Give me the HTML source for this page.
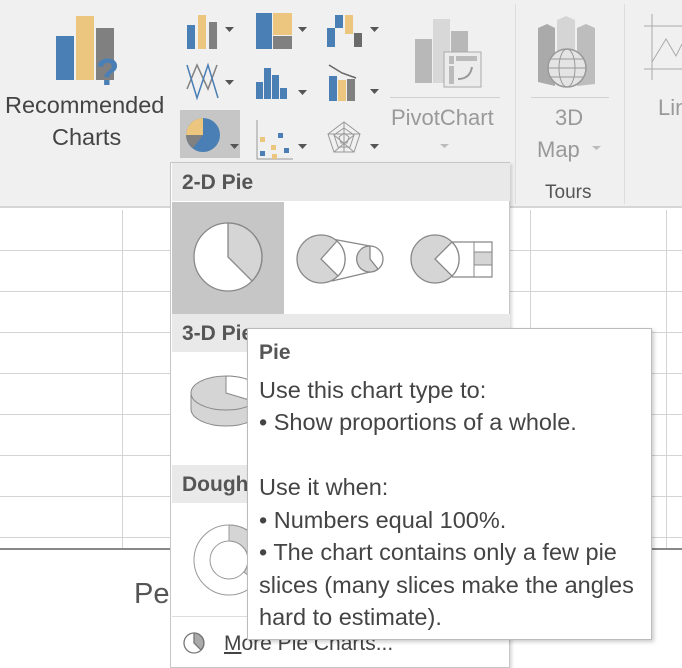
<!DOCTYPE html>
<html><head><meta charset="utf-8"><style>
*{margin:0;padding:0;box-sizing:border-box}
body{width:682px;height:668px;overflow:hidden;background:#fff;font-family:"Liberation Sans","DejaVu Sans",sans-serif;position:relative;color:#444}
.a{position:absolute}
.rib{left:0;top:0;width:682px;height:208px;background:#f0f0f0;border-bottom:2px solid #d6d6d6}
.t{position:absolute;white-space:nowrap}
.hl{position:absolute;height:1px;background:#d4d4d4}
.vl{position:absolute;width:1px;background:#d4d4d4}
.hdr{position:absolute;left:1px;width:338px;height:38px;background:#e9e9e9;font-weight:bold;font-size:21px;color:#555;padding:8px 0 0 10px}
.tip div{font-size:23.5px;line-height:32.5px;color:#444;white-space:nowrap}
</style></head><body>
<div class="a rib"></div>
<svg class="a" style="left:50px;top:12px" width="80" height="80">
<rect x="6" y="24" width="18" height="44" fill="#4a7fb5"/>
<rect x="26" y="4" width="18" height="64" fill="#ecc67e"/>
<rect x="46" y="16" width="18" height="52" fill="#808080"/>
<text x="46" y="73" font-size="38" font-weight="bold" fill="#4a7fb5" font-family="Liberation Sans">?</text>
</svg>
<div class="t" style="left:5px;top:92px;font-size:23.5px;color:#444">Recommended</div>
<div class="t" style="left:52px;top:124px;font-size:23.5px;color:#444">Charts</div>
<svg class="a" style="left:180px;top:10px" width="210" height="150">
<g><rect x="7" y="15" width="8" height="24" fill="#4a7fb5"/><rect x="18" y="5" width="8" height="34" fill="#ecc67e"/><rect x="29" y="12" width="8" height="27" fill="#808080"/><path d="M45 17h9l-4.5 5z" fill="#555"/></g>
<g transform="translate(76,0)"><rect x="0" y="3" width="16" height="36" fill="#4a7fb5"/><rect x="17" y="3" width="19" height="22" fill="#ecc67e"/><rect x="17" y="26" width="19" height="13" fill="#808080"/><path d="M42 17h9l-4.5 5z" fill="#555"/></g>
<g transform="translate(146,0)"><rect x="1" y="18" width="8" height="19" fill="#4a7fb5"/><rect x="9" y="5" width="8" height="13" fill="#4a7fb5"/><rect x="19" y="5" width="8" height="19" fill="#ecc67e"/><rect x="28" y="23" width="8" height="14" fill="#6b6b6b"/><path d="M44 17h9l-4.5 5z" fill="#555"/></g>
<g transform="translate(0,53)" fill="none" stroke-width="1.5"><path d="M7 26L17 2L28 26L37 2" stroke="#808080"/><path d="M7 2L17 35L28 2L38 35" stroke="#4a7fb5"/><path d="M45 17h9l-4.5 5z" fill="#555" stroke="none"/></g>
<g transform="translate(76,50)"><rect x="0" y="22" width="7" height="17" fill="#4a7fb5"/><rect x="8" y="8" width="7" height="31" fill="#4a7fb5"/><rect x="16" y="15" width="7" height="24" fill="#4a7fb5"/><rect x="24" y="28" width="7" height="11" fill="#4a7fb5"/><path d="M42 30h9l-4.5 5z" fill="#555"/></g>
<g transform="translate(146,52)"><rect x="3" y="14" width="8" height="25" fill="#4a7fb5"/><rect x="12" y="18" width="8" height="21" fill="#ecc67e"/><rect x="21" y="17" width="8" height="22" fill="#808080"/><path d="M3 3L16 11L30 16" stroke="#666" stroke-width="1.5" fill="none"/><path d="M44 27h9l-4.5 5z" fill="#555"/></g>
<rect x="-10" y="100" width="70" height="48" fill="#c6c6c6"/>
<g transform="translate(5,107)"><circle cx="18" cy="18" r="17" fill="#4a7fb5"/><path d="M18 18V1A17 17 0 0 0 1 18z" fill="#ecc67e"/><path d="M18 18H1A17 17 0 0 0 8 31z" fill="#808080"/><path d="M45 27h9l-4.5 5z" fill="#555"/></g>
<g transform="translate(76,110)"><path d="M1 0V39H37" stroke="#999" fill="none"/><rect x="4" y="17" width="5" height="5" fill="#ecc67e"/><rect x="15" y="25" width="5" height="5" fill="#ecc67e"/><rect x="4" y="31" width="5" height="5" fill="#4a7fb5"/><rect x="22" y="13" width="5" height="5" fill="#4a7fb5"/><rect x="28" y="28" width="5" height="5" fill="#4a7fb5"/><rect x="16" y="34" width="5" height="5" fill="#ecc67e"/><path d="M42 24h9l-4.5 5z" fill="#555"/></g>
<g transform="translate(146,110)" stroke="#999" fill="none"><path d="M18 2L34 14L28 32H8L2 14z M18 8L28 15L24 27H12L8 15z M18 13L23 17L21 23H15L13 17z M18 2V32M2 14L34 14M8 32L28 15M28 32L8 15"/><path d="M44 24h9l-4.5 5z" fill="#555" stroke="none"/></g>
</svg>
<svg class="a" style="left:412px;top:16px" width="70" height="76">
<rect x="3" y="23" width="17" height="44" fill="#b8b8b8"/><rect x="21" y="3" width="17" height="64" fill="#d8d8d8"/><rect x="39" y="15" width="17" height="40" fill="#b8b8b8"/>
<rect x="32" y="36" width="37" height="35" fill="#ececec" stroke="#aaa"/><rect x="37" y="40" width="5" height="8" fill="#bbb"/><rect x="44" y="40" width="21" height="5" fill="#bbb"/><rect x="37" y="50" width="5" height="18" fill="#bbb"/><path d="M46 63q12 0 14-12" stroke="#999" stroke-width="2" fill="none"/>
</svg>
<div class="hl" style="left:390px;top:97px;width:110px;background:#d0d0d0"></div>
<div class="t" style="left:391px;top:105px;font-size:22px;color:#999">PivotChart</div>
<svg class="a" style="left:440px;top:144px" width="10" height="6"><path d="M0 0h9l-4.5 4z" fill="#bbb"/></svg>
<div class="vl" style="left:515px;top:4px;height:200px;background:#ddd"></div>
<svg class="a" style="left:535px;top:14px" width="70" height="76">
<path d="M3 14L12 10L20 14V72L3 68z" fill="#aaa"/><path d="M22 6L31 2L40 6V72H22z" fill="#d5d5d5"/><path d="M42 14L51 10L60 14V70L42 72z" fill="#bdbdbd"/>
<circle cx="32" cy="54" r="19" fill="#e4e4e4" stroke="#999" stroke-width="1.5"/><ellipse cx="32" cy="54" rx="8" ry="19" fill="none" stroke="#999"/><path d="M13 54H51M16 45H48M16 63H48" stroke="#999" fill="none"/>
</svg>
<div class="hl" style="left:531px;top:97px;width:78px;background:#d0d0d0"></div>
<div class="t" style="left:555px;top:105px;font-size:22px;color:#999">3D</div>
<div class="t" style="left:537px;top:137px;font-size:22px;color:#999">Map</div>
<svg class="a" style="left:592px;top:146px" width="10" height="6"><path d="M0 0h9l-4.5 4z" fill="#bbb"/></svg>
<div class="t" style="left:545px;top:182px;font-size:19px;color:#555">Tours</div>
<div class="vl" style="left:624px;top:4px;height:200px;background:#ddd"></div>
<svg class="a" style="left:644px;top:14px" width="38" height="70" stroke="#aaa" fill="none"><path d="M8 0V66M0 55H38M0 12H38M8 48L22 25L32 42L38 30"/></svg>
<div class="t" style="left:658px;top:95px;font-size:22px;color:#999">Lin</div>
<div class="hl" style="left:0;top:250px;width:682px"></div>
<div class="hl" style="left:0;top:291px;width:682px"></div>
<div class="hl" style="left:0;top:332px;width:682px"></div>
<div class="hl" style="left:0;top:373px;width:682px"></div>
<div class="hl" style="left:0;top:414px;width:682px"></div>
<div class="hl" style="left:0;top:455px;width:682px"></div>
<div class="hl" style="left:0;top:496px;width:682px"></div>
<div class="hl" style="left:0;top:537px;width:682px"></div>
<div class="vl" style="left:122px;top:210px;height:338px"></div>
<div class="vl" style="left:530px;top:210px;height:338px"></div>
<div class="vl" style="left:666px;top:210px;height:338px"></div>
<div class="a" style="left:0;top:548px;width:682px;height:120px;background:#fff;border-top:2px solid #888"></div>
<div class="t" style="left:134px;top:578px;font-size:29px;color:#555">Pe</div>
<div class="a" style="left:170px;top:162px;width:340px;height:506px;background:#fff;border:1px solid #c6c6c6;box-shadow:2px 2px 3px rgba(0,0,0,.15)">
<div class="hdr" style="top:0">2-D Pie</div>
<div class="a" style="left:1px;top:39px;width:112px;height:112px;background:#c6c6c6"></div>
<svg class="a" style="left:0;top:39px" width="338" height="112">
<circle cx="57" cy="55" r="34" fill="#fff" stroke="#888" stroke-width="1.3"/><path d="M57 55V21A34 34 0 0 1 81 79z" fill="#d5d5d5" stroke="#888" stroke-width="1.3"/>
<path d="M161 37L199 44M161 79L199 70" stroke="#888" stroke-width="1.2"/>
<circle cx="150" cy="57" r="24" fill="#d5d5d5" stroke="#888" stroke-width="1.3"/>
<path d="M150 57L166 39A24 24 0 0 1 167 74z" fill="#fff" stroke="#888" stroke-width="1.3"/>
<circle cx="199" cy="57" r="13" fill="#fff" stroke="#888" stroke-width="1.3"/>
<path d="M199 57V44A13 13 0 1 0 207 67z" fill="#d5d5d5" stroke="#888" stroke-width="1.3"/>
<circle cx="264" cy="57" r="24" fill="#d5d5d5" stroke="#888" stroke-width="1.3"/>
<path d="M264 57L281 40A24 24 0 0 1 281 74z" fill="#fff" stroke="#888" stroke-width="1.3"/>
<path d="M281 40H321V75H281" stroke="#888" fill="none" stroke-width="1.2"/>
<rect x="303" y="50" width="18" height="13" fill="#d5d5d5" stroke="#888"/>
<rect x="303" y="40" width="18" height="35" fill="none" stroke="#888"/>
</svg>
<div class="hdr" style="top:151px">3-D Pie</div>
<svg class="a" style="left:0;top:190px" width="120" height="112">
<path d="M20 40V56A35 17 0 0 0 90 56V40" fill="#d5d5d5" stroke="#888"/><ellipse cx="55" cy="40" rx="35" ry="17" fill="#d5d5d5" stroke="#888"/><path d="M55 40V23A35 17 0 0 1 85 49z" fill="#fff" stroke="#888"/>
</svg>
<div class="hdr" style="top:302px">Doughnut</div>
<svg class="a" style="left:0;top:341px" width="120" height="112">
<circle cx="58" cy="56" r="35" fill="#fff" stroke="#999"/><circle cx="58" cy="56" r="19" fill="#fff" stroke="#999"/><path d="M58 21A35 35 0 0 1 85 78L73 68A19 19 0 0 0 58 37z" fill="#d5d5d5" stroke="#999"/>
</svg>
<div class="hl" style="left:1px;top:453px;width:338px;background:#ddd"></div>
<svg class="a" style="left:12px;top:469px" width="24" height="24"><circle cx="11" cy="11" r="10" fill="#fff" stroke="#777" stroke-width="1.3"/><path d="M11 11V1A10 10 0 0 1 18 18z" fill="#aaa" stroke="#777" stroke-width="1.3"/></svg>
<div class="t" style="left:53px;top:469px;font-size:21px;color:#444"><span style="text-decoration:underline">M</span>ore Pie Charts...</div>
</div>
<div class="a tip" style="left:247px;top:328px;width:405px;height:312px;background:#fff;border:1px solid #bcbcbc;box-shadow:2px 2px 4px rgba(0,0,0,.2);padding:8px 0 0 11px">
<div style="font-weight:bold;color:#555;font-size:21px">Pie</div>
<div style="margin-top:4px">Use this chart type to:</div>
<div>• Show proportions of a whole.</div>
<div>&nbsp;</div>
<div>Use it when:</div>
<div>• Numbers equal 100%.</div>
<div>• The chart contains only a few pie</div>
<div>slices (many slices make the angles</div>
<div>hard to estimate).</div>
</div>
</body></html>
